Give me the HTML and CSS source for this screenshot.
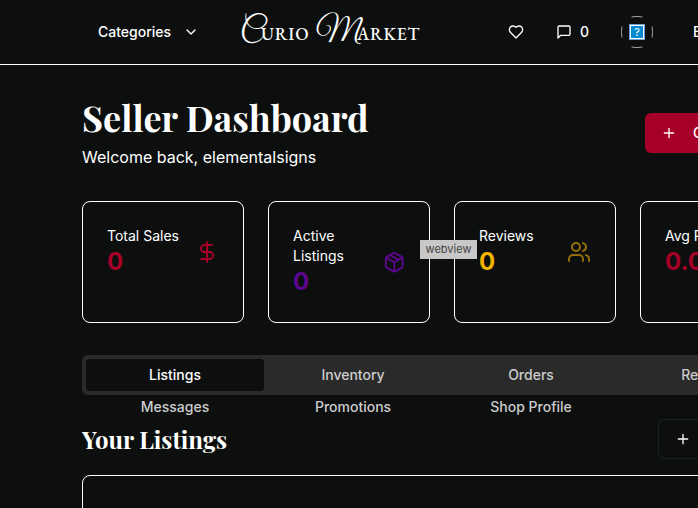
FILE: index.html
```html
<!DOCTYPE html>
<html lang="en">
<head>
<meta charset="utf-8">
<title>Curio Market</title>
<link rel="stylesheet" href="styles.css">
</head>
<body>
<div class="page">
  <header class="nav">
    <button class="categories">Categories
      <svg class="icon chevron" viewBox="0 0 24 24"><path d="m6 9 6 6 6-6"/></svg>
    </button>
    <a class="logo"><span class="cap cap-c">C</span><span class="small">URIO</span><span class="cap cap-m">M</span><span class="small">ARKET</span></a>
    <div class="actions">
      <svg class="icon heart" viewBox="0 0 24 24"><path d="M19 14c1.49-1.46 3-3.21 3-5.5A5.5 5.5 0 0 0 16.5 3c-1.76 0-3 .5-4.5 2-1.5-1.5-2.74-2-4.5-2A5.5 5.5 0 0 0 2 8.5c0 2.3 1.5 4.05 3 5.5l7 7Z"/></svg>
      <div class="messages"><svg class="icon" viewBox="0 0 24 24"><path d="M21 15a2 2 0 0 1-2 2H7l-4 4V5a2 2 0 0 1 2-2h14a2 2 0 0 1 2 2z"/></svg><span>0</span></div>
      <div class="avatar"><svg class="ring" viewBox="0 0 32 32"><path d="M10.500 1Q16 -.3 21.500 1M10.500 31Q16 32.300 21.500 31M1 10.500Q-.3 16 1 21.500M31 10.500Q32.300 16 31 21.500"/></svg><span class="missing">?</span></div>
      <span class="account">Browse</span>
    </div>
  </header>
  <main class="content">
    <div class="heading">
      <div>
        <h1>Seller Dashboard</h1>
        <p>Welcome back, elementalsigns</p>
      </div>
      <button class="create"><svg class="icon" viewBox="0 0 24 24"><path d="M5 12h14M12 5v14"/></svg>Create Listing</button>
    </div>
    <section class="stats">
      <article class="card red">
        <div><div class="label">Total Sales</div><div class="value">0</div></div>
        <svg class="icon stat-icon" viewBox="0 0 24 24"><path d="M12 2v20M17 5H9.500a3.500 3.500 0 0 0 0 7h5a3.500 3.500 0 0 1 0 7H6"/></svg>
      </article>
      <article class="card purple">
        <div><div class="label">Active Listings</div><div class="value">0</div></div>
        <svg class="icon stat-icon" viewBox="0 0 24 24"><path d="m7.500 4.270 9 5.150M21 8a2 2 0 0 0-1-1.730l-7-4a2 2 0 0 0-2 0l-7 4A2 2 0 0 0 3 8v8a2 2 0 0 0 1 1.730l7 4a2 2 0 0 0 2 0l7-4A2 2 0 0 0 21 16ZM3.300 7l8.700 5 8.700-5M12 22V12"/></svg>
        <span class="tooltip">webview</span>
      </article>
      <article class="card gold">
        <div><div class="label">Reviews</div><div class="value">0</div></div>
        <svg class="icon stat-icon" viewBox="0 0 24 24"><path d="M16 21v-2a4 4 0 0 0-4-4H6a4 4 0 0 0-4 4v2"/><circle cx="9" cy="7" r="4"/><path d="M22 21v-2a4 4 0 0 0-3-3.870M16 3.130a4 4 0 0 1 0 7.750"/></svg>
      </article>
      <article class="card red">
        <div><div class="label">Avg Rating</div><div class="value">0.0</div></div>
      </article>
    </section>
    <nav class="tabs">
      <a class="tab active">Listings</a><a class="tab">Inventory</a><a class="tab">Orders</a><a class="tab">Reviews</a>
      <a class="tab">Messages</a><a class="tab">Promotions</a><a class="tab">Shop Profile</a>
    </nav>
    <div class="listing-head">
      <h2>Your Listings</h2>
      <button class="add"><svg class="icon" viewBox="0 0 24 24"><path d="M5 12h14M12 5v14"/></svg>Add Listing</button>
    </div>
    <section class="listing-panel"></section>
  </main>
</div>
</body>
</html>
```

FILE: styles.css
```css
* { box-sizing: border-box; }
html { overflow: hidden; }
body {
  margin: 0;
  height: 508px;
  overflow: hidden;
  background: #0c0f0e;
  color: #fff;
  font: 14px/20px Inter, sans-serif;
}
button { border: 0; padding: 0; background: none; color: inherit; font: inherit; font-weight: 500; }
h1, h2, p { margin: 0; }
.page { width: 884px; height: 508px; overflow: hidden; }
.icon {
  width: 16px;
  height: 16px;
  flex: none;
  fill: none;
  stroke: currentColor;
  stroke-width: 2;
  stroke-linecap: round;
  stroke-linejoin: round;
}
.nav { display: flex; align-items: center; height: 65px; padding-left: 98px; border-bottom: 1px solid #fff; }
.categories { display: flex; align-items: center; gap: 12px; width: 142px; }
.logo { display: flex; align-items: baseline; width: 268px; padding-top: 3px; line-height: 40px; }
.cap { font-family: "Great Vibes", "Pinyon Script", "Petit Formal Script", "Dancing Script", "Liberation Serif", serif; font-size: 32px; }
.cap-c { width: 21px; }
.cap-m { width: 41px; margin-left: 8px; }
.small { font-family: "EB Garamond", "Cormorant Garamond", "Liberation Serif", serif; font-size: 17.5px; font-weight: 500; letter-spacing: .8px; }
.cap-c + .small { width: 47px; }
.actions { display: flex; align-items: center; font-weight: 500; }
.messages { display: flex; align-items: center; gap: 8px; margin-left: 32px; width: 65px; }
.avatar { position: relative; display: grid; place-items: center; width: 32px; height: 32px; }
.ring { position: absolute; inset: 0; fill: none; stroke: #a5a7a6; }
.missing { width: 16px; height: 16px; border: 1px solid #6f9fd5; background: #078bd0; box-shadow: inset 0 0 0 1px #fff; text-align: center; font-size: 11px; font-weight: 400; line-height: 14px; }
.account { margin-left: 40px; }
.content { width: 720px; margin-left: 82px; padding-top: 32px; }
.heading { display: flex; justify-content: space-between; align-items: center; height: 72px; }
h1 { height: 48px; font: bold 36px/41px "Playfair Display", "Liberation Serif", serif; white-space: nowrap; }
.heading p { font-size: 16px; line-height: 24px; }
.create { display: flex; align-items: center; gap: 16px; width: 157px; height: 40px; padding-left: 16px; border-radius: 6px; background: #a60028; }
.stats { display: grid; grid-template-columns: repeat(4, 162px); gap: 24px; margin-top: 32px; }
.card { position: relative; display: flex; justify-content: space-between; height: 122px; padding: 24px; border: 1px solid #fff; border-radius: 8px; }
.label { max-width: 76px; }
.value { font-size: 24px; font-weight: 700; line-height: 32px; }
.stat-icon { width: 24px; height: 24px; margin-top: 14px; }
.red .value, .red .stat-icon { color: #a60028; }
.purple .value, .purple .stat-icon { color: #5e078e; }
.purple .stat-icon { width: 22.5px; height: 22.5px; margin-top: 25px; }
.gold .value { color: #f2b400; }
.gold .stat-icon { color: #946e06; }
.tooltip { position: absolute; z-index: 1; left: 151px; top: 38px; width: 57px; height: 19px; background: #c8c8c8; color: #444; font-size: 11px; line-height: 19px; text-align: center; }
.tabs { display: grid; grid-template-columns: repeat(4, 178px); grid-auto-rows: 32px; height: 40px; margin-top: 32px; padding: 4px; border-radius: 6px; background: #2a2a2a; }
.tab { display: grid; place-items: center; color: #cdcdcd; font-weight: 500; }
.tab.active { border-radius: 4px; background: #0c0f0e; color: #fff; }
.listing-head { display: flex; align-items: center; justify-content: space-between; height: 40px; margin-top: 24px; }
h2 { font: bold 24px/32px "Playfair Display", "Liberation Serif", serif; letter-spacing: -.04px; white-space: nowrap; }
.add { display: flex; align-items: center; gap: 16px; width: 144px; height: 40px; padding-left: 16px; border: 1px solid #1d2120; border-radius: 6px; }
.listing-panel { height: 122px; margin-top: 16px; border: 1px solid #fff; border-radius: 8px; }
```
